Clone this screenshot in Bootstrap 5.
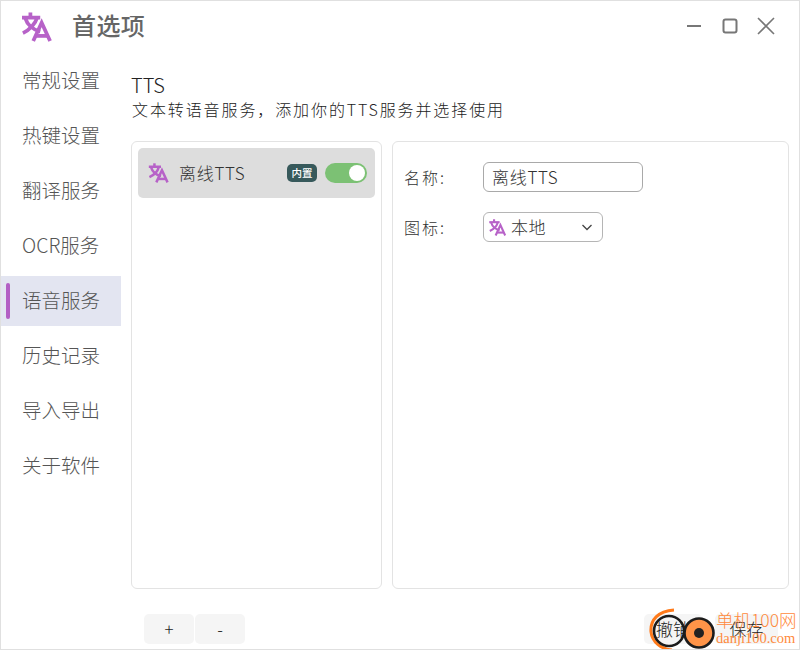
<!DOCTYPE html>
<html lang="zh-CN">
<head>
  <meta charset="UTF-8" />
  <title>首选项</title>
  <link href="https://cdn.jsdelivr.net/npm/bootstrap@5.3.0/dist/css/bootstrap.min.css" rel="stylesheet">
  <style>
    html, body { height: 100%; overflow: hidden; }
    body {
      font-family: "Noto Sans CJK SC", "Noto Sans", sans-serif;
      font-weight: 300;
      background: #fff;
      color: #222;
    }
    .app-window {
      width: 800px;
      height: 650px;
      border: 1px solid #e0e0e0;
      position: relative;
      overflow: hidden;
    }
    .title-bar { height: 55px; padding: 0 24px 3px 20px; }
    .title-text { font-size: 24px; font-weight: 500; color: #666; line-height: 1; margin-left: 20px; margin-bottom: 4px; letter-spacing: .4px; }
    .win-btn { width: 18px; height: 18px; color: #777; margin-left: 18px; margin-bottom: 2px; }
    .side-col { width: 120px; flex: none; }
    .side-item {
      height: 50px;
      margin-bottom: 5px;
      padding: 0 0 2px 21px;
      font-size: 19.5px;
      color: #555;
      position: relative;
    }
    .side-item.selected { background: #e3e5f1; }
    .side-item.selected::before {
      content: "";
      position: absolute;
      left: 5px;
      top: 7px;
      width: 4px;
      height: 36px;
      border-radius: 2px;
      background: #b35fc4;
    }
    .main-col { width: 658px; margin-left: 10px; }
    .head-tts { font-size: 20px; line-height: 24px; margin-top: 17px; color: #222; }
    .head-sub { font-size: 16px; line-height: 24px; margin-left: 1px; color: #222; letter-spacing: 1.9px; white-space: nowrap; }
    .panels { height: 448px; margin-top: 20px; gap: 10px; }
    .panel-box { border: 1px solid #e3e3e3; border-radius: 6px; background: #fff; }
    .panel-left { width: 251px; padding: 6px; }
    .panel-right { width: 397px; padding: 20px 11px; }
    .service-row { height: 50px; background: #dddddd; border-radius: 5px; padding: 0 8px 0 10px; }
    .service-name { font-size: 17px; margin-left: 10px; color: #333; letter-spacing: .7px; }
    .tag-builtin {
      background: #37595b;
      color: #fff;
      font-size: 10.5px;
      font-weight: 500;
      line-height: 18px;
      height: 18px;
      width: 30px;
      text-align: center;
      border-radius: 5px;
      margin-right: 8px;
    }
    .toggle-on { width: 42px; height: 20px; border-radius: 10px; background: #7cc174; padding: 2px 2px; justify-content: flex-end; }
    .toggle-knob { width: 16px; height: 16px; border-radius: 50%; background: #fff; }
    .form-line { height: 30px; margin-bottom: 20px; }
    .form-label-text { width: 79px; font-size: 16px; letter-spacing: 2px; color: #333; }
    .name-field {
      width: 160px;
      height: 30px;
      border: 1px solid #a9a9a9;
      border-radius: 6px;
      padding: 0 8px;
      font-size: 17px;
      line-height: 28px;
      color: #333;
      letter-spacing: .7px;
    }
    .icon-field {
      width: 120px;
      height: 30px;
      border: 1px solid #b5b5b5;
      border-radius: 6px;
      padding: 0 9px 0 5px;
      font-size: 17px;
      color: #333;
    }
    .icon-field span { margin-left: 5px; letter-spacing: .5px; }
    .foot-bar { height: 30px; margin-top: 25px; padding-left: 143px; }
    .foot-btn {
      background: #f5f5f5;
      border: 0;
      border-radius: 5px;
      height: 30px;
      font-size: 17px;
      font-weight: 300;
      color: #222;
      padding: 0;
      line-height: 30px;
      margin-right: 1px;
    }
    .foot-small { width: 50px; }
    .foot-cancel { width: 58px; }
    .foot-save { width: 63px; }
    .foot-right { margin-left: auto; margin-right: 20px; gap: 12px; display: flex; }
    .stamp { position: absolute; left: 645px; top: 604px; width: 155px; height: 46px; pointer-events: none; }
    .stamp-logo { position: absolute; left: 0; top: 0; }
    .stamp-big {
      position: absolute;
      left: 70px;
      top: 3px;
      font-size: 17.5px;
      line-height: 24px;
      color: #ff8a3c;
      white-space: nowrap;
    }
    .stamp-small {
      position: absolute;
      left: 70px;
      top: 24px;
      font-size: 14.5px;
      line-height: 18px;
      color: #ff8a3c;
      white-space: nowrap;
      font-family: "Liberation Serif", serif;
    }
  </style>
</head>
<body>
  <svg width="0" height="0" class="position-absolute">
    <symbol id="logo-mark" viewBox="0 0 32 32">
      <g fill="none" stroke="#b762c8" stroke-width="4">
        <path d="M0.5 6H20"/>
        <path d="M9.5 0.5V6"/>
        <path d="M4 6.5C6 13 12 19 20 21"/>
        <path d="M16.5 6.5C15 12 9 19 1.5 22.5"/>
        <path d="M12.5 31L21.5 11.5L30.5 31"/>
        <path d="M15.5 25.5H27.5"/>
      </g>
    </symbol>
  </svg>

  <div class="app-window d-flex flex-column">
    <div class="title-bar d-flex align-items-center">
      <svg width="31" height="30"><use href="#logo-mark"/></svg>
      <div class="title-text">首选项</div>
      <div class="ms-auto d-flex align-items-center">
        <svg class="win-btn" viewBox="0 0 18 18" fill="none" stroke="currentColor" stroke-width="2"><path d="M2 9H16"/></svg>
        <svg class="win-btn" viewBox="0 0 18 18" fill="none" stroke="currentColor" stroke-width="2"><rect x="2.5" y="2.5" width="13" height="13" rx="2"/></svg>
        <svg class="win-btn" viewBox="0 0 18 18" fill="none" stroke="currentColor" stroke-width="1.6"><path d="M1 1L17 17M17 1L1 17"/></svg>
      </div>
    </div>

    <div class="d-flex">
      <div class="side-col">
        <div class="side-item d-flex align-items-center">常规设置</div>
        <div class="side-item d-flex align-items-center">热键设置</div>
        <div class="side-item d-flex align-items-center">翻译服务</div>
        <div class="side-item d-flex align-items-center">OCR服务</div>
        <div class="side-item selected d-flex align-items-center">语音服务</div>
        <div class="side-item d-flex align-items-center">历史记录</div>
        <div class="side-item d-flex align-items-center">导入导出</div>
        <div class="side-item d-flex align-items-center">关于软件</div>
      </div>

      <div class="main-col">
        <div class="head-tts">TTS</div>
        <div class="head-sub">文本转语音服务，添加你的TTS服务并选择使用</div>

        <div class="panels d-flex">
          <div class="panel-box panel-left">
            <div class="service-row d-flex align-items-center">
              <svg width="21" height="20"><use href="#logo-mark"/></svg>
              <div class="service-name">离线TTS</div>
              <div class="tag-builtin ms-auto">内置</div>
              <div class="toggle-on d-flex align-items-center"><div class="toggle-knob"></div></div>
            </div>
          </div>
          <div class="panel-box panel-right">
            <div class="form-line d-flex align-items-center">
              <div class="form-label-text">名称:</div>
              <div class="name-field">离线TTS</div>
            </div>
            <div class="form-line d-flex align-items-center">
              <div class="form-label-text">图标:</div>
              <div class="icon-field d-flex align-items-center">
                <svg width="17" height="17"><use href="#logo-mark"/></svg>
                <span>本地</span>
                <svg class="ms-auto" width="12" height="12" viewBox="0 0 12 12" fill="none" stroke="#444" stroke-width="1.3"><path d="M1.5 4L6 8.5L10.5 4"/></svg>
              </div>
            </div>
          </div>
        </div>
      </div>
    </div>

    <div class="foot-bar d-flex">
      <button class="foot-btn foot-small">+</button>
      <button class="foot-btn foot-small">-</button>
      <div class="foot-right">
        <button class="foot-btn foot-cancel">撤销</button>
        <button class="foot-btn foot-save">保存</button>
      </div>
    </div>

    <div class="stamp">
      <svg class="stamp-logo" width="70" height="46" viewBox="0 0 70 46" fill="none">
        <path d="M28 5C12 6 4 15 5 27C6 37 15 44 26 45" stroke="#ff7a1a" stroke-width="3"/>
        <circle cx="23" cy="26" r="15" stroke="#1c1c1c" stroke-width="2.6"/>
        <circle cx="53" cy="28" r="14.5" fill="#ff9448" stroke="#1c1c1c" stroke-width="2.6"/>
        <circle cx="53" cy="28" r="5" fill="#222"/>
      </svg>
      <div class="stamp-big">单机100网</div>
      <div class="stamp-small">danji100.com</div>
    </div>
  </div>
</body>
</html>
